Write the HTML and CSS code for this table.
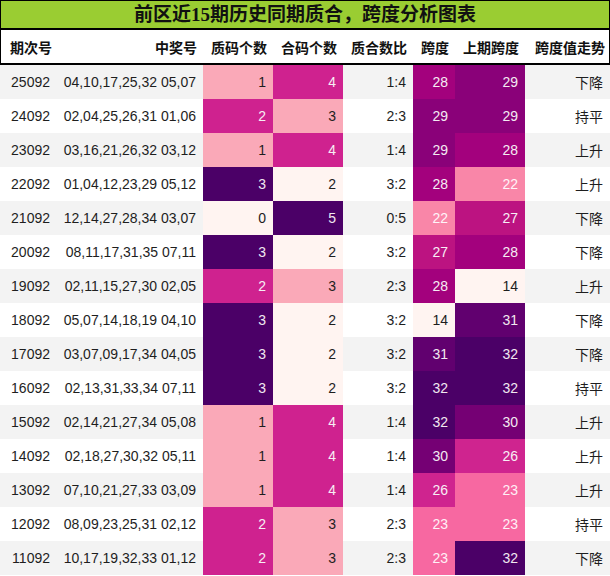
FILE: index.html
```html
<!DOCTYPE html>
<html lang="zh">
<head>
<meta charset="utf-8">
<title>前区近15期历史同期质合，跨度分析图表</title>
<link rel="stylesheet" href="styles.css">
</head>
<body>
<div class="chart">
  <div class="title">前区近15期历史同期质合，跨度分析图表</div>
  <div class="row head">
    <div>期次号</div><div>中奖号</div><div>质码个数</div><div>合码个数</div><div>质合数比</div><div>跨度</div><div>上期跨度</div><div>跨度值走势</div>
  </div>
  <div class="row">
    <div>25092</div><div>04,10,17,25,32 05,07</div><div class="h1">1</div><div class="h2">4</div><div>1:4</div><div class="s28">28</div><div class="s29">29</div><div class="cjk">下降</div>
  </div>
  <div class="row">
    <div>24092</div><div>02,04,25,26,31 01,06</div><div class="h2">2</div><div class="h1">3</div><div>2:3</div><div class="s29">29</div><div class="s29">29</div><div class="cjk">持平</div>
  </div>
  <div class="row">
    <div>23092</div><div>03,16,21,26,32 03,12</div><div class="h1">1</div><div class="h2">4</div><div>1:4</div><div class="s29">29</div><div class="s28">28</div><div class="cjk">上升</div>
  </div>
  <div class="row">
    <div>22092</div><div>01,04,12,23,29 05,12</div><div class="h3">3</div><div class="h0">2</div><div>3:2</div><div class="s28">28</div><div class="s22">22</div><div class="cjk">上升</div>
  </div>
  <div class="row">
    <div>21092</div><div>12,14,27,28,34 03,07</div><div class="h0">0</div><div class="h3">5</div><div>0:5</div><div class="s22">22</div><div class="s27">27</div><div class="cjk">下降</div>
  </div>
  <div class="row">
    <div>20092</div><div>08,11,17,31,35 07,11</div><div class="h3">3</div><div class="h0">2</div><div>3:2</div><div class="s27">27</div><div class="s28">28</div><div class="cjk">下降</div>
  </div>
  <div class="row">
    <div>19092</div><div>02,11,15,27,30 02,05</div><div class="h2">2</div><div class="h1">3</div><div>2:3</div><div class="s28">28</div><div class="s14">14</div><div class="cjk">上升</div>
  </div>
  <div class="row">
    <div>18092</div><div>05,07,14,18,19 04,10</div><div class="h3">3</div><div class="h0">2</div><div>3:2</div><div class="s14">14</div><div class="s31">31</div><div class="cjk">下降</div>
  </div>
  <div class="row">
    <div>17092</div><div>03,07,09,17,34 04,05</div><div class="h3">3</div><div class="h0">2</div><div>3:2</div><div class="s31">31</div><div class="s32">32</div><div class="cjk">下降</div>
  </div>
  <div class="row">
    <div>16092</div><div>02,13,31,33,34 07,11</div><div class="h3">3</div><div class="h0">2</div><div>3:2</div><div class="s32">32</div><div class="s32">32</div><div class="cjk">持平</div>
  </div>
  <div class="row">
    <div>15092</div><div>02,14,21,27,34 05,08</div><div class="h1">1</div><div class="h2">4</div><div>1:4</div><div class="s32">32</div><div class="s30">30</div><div class="cjk">上升</div>
  </div>
  <div class="row">
    <div>14092</div><div>02,18,27,30,32 05,11</div><div class="h1">1</div><div class="h2">4</div><div>1:4</div><div class="s30">30</div><div class="s26">26</div><div class="cjk">上升</div>
  </div>
  <div class="row">
    <div>13092</div><div>07,10,21,27,33 03,09</div><div class="h1">1</div><div class="h2">4</div><div>1:4</div><div class="s26">26</div><div class="s23">23</div><div class="cjk">上升</div>
  </div>
  <div class="row">
    <div>12092</div><div>08,09,23,25,31 02,12</div><div class="h2">2</div><div class="h1">3</div><div>2:3</div><div class="s23">23</div><div class="s23">23</div><div class="cjk">持平</div>
  </div>
  <div class="row">
    <div>11092</div><div>10,17,19,32,33 01,12</div><div class="h2">2</div><div class="h1">3</div><div>2:3</div><div class="s23">23</div><div class="s32">32</div><div class="cjk">下降</div>
  </div>
</div>
</body>
</html>
```

FILE: styles.css
```css
html, body {
  margin: 0;
  padding: 0;
  background: #ffffff;
}

.chart {
  width: 610px;
  font-family: "Liberation Sans", "Noto Sans CJK SC", sans-serif;
  font-size: 14px;
  color: #1e1e1e;
}

.title {
  box-sizing: border-box;
  height: 30px;
  border: 1px solid #000;
  border-bottom-width: 2px;
  background: #9acd32;
  font-family: "Liberation Serif", "Noto Sans CJK SC", serif;
  font-weight: bold;
  font-size: 19px;
  line-height: 27px;
  text-align: center;
  color: #111;
}

.row {
  display: grid;
  grid-template-columns: 57px 146px 70px 70px 70px 42px 70px 85px;
  height: 34px;
}

.row > div {
  display: flex;
  align-items: center;
  justify-content: flex-end;
  padding-right: 7px;
  white-space: nowrap;
}

.row:nth-child(odd) {
  background: #f3f3f3;
}

.row:nth-child(even) {
  background: #ffffff;
}

.row.head {
  box-sizing: border-box;
  height: 35px;
  background: #ffffff;
  border-left: 1px solid #000;
  border-right: 1px solid #000;
  border-bottom: 2px solid #000;
  font-family: "Noto Sans CJK SC", sans-serif;
  font-weight: bold;
  font-size: 14px;
  color: #111;
}

.row.head > div:first-child {
  padding-right: 6px;
}

.row.head > div:last-child {
  padding-right: 6px;
}

.cjk {
  font-family: "Noto Sans CJK SC", sans-serif;
}

/* count heat levels */
.h0 { background: #fff4f1; }
.h1 { background: #faa9b8; }
.h2 { background: #cf228f; color: #f6eef4; }
.h3 { background: #4b0067; color: #f1e8f0; }

/* span heat levels */
.s14 { background: #fff4f1; }
.s22 { background: #f986a8; color: #fff4f8; }
.s23 { background: #f768a1; color: #fff0f6; }
.s26 { background: #cf248f; color: #f8eef5; }
.s27 { background: #bc1381; color: #f8eef5; }
.s28 { background: #a3017d; color: #f6ecf3; }
.s29 { background: #8a0179; color: #f4eaf2; }
.s30 { background: #750074; color: #f3e9f1; }
.s31 { background: #61006f; color: #f2e8f0; }
.s32 { background: #4b0067; color: #f1e8f0; }
```
